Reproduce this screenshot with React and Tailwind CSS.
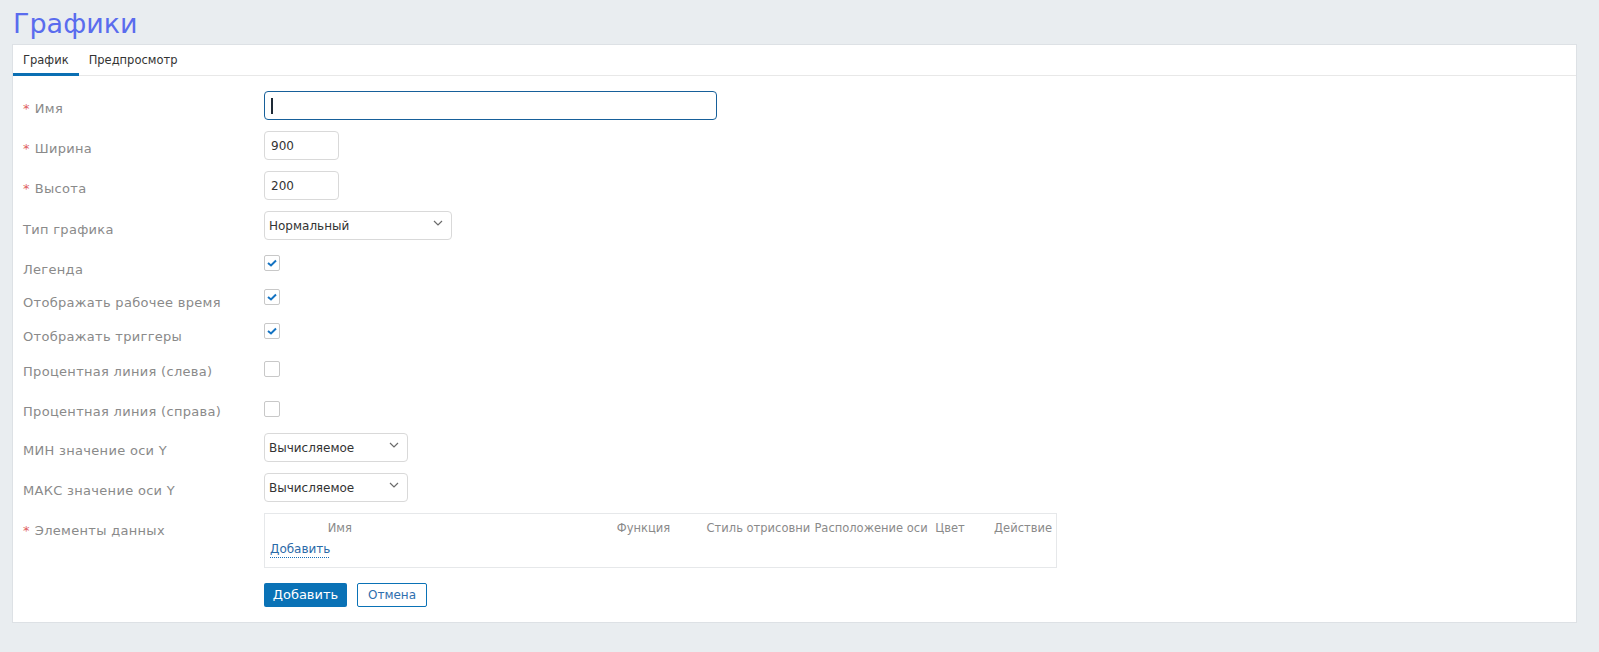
// App.jsx
import React from "react";

const FONT = { fontFamily: '"DejaVu Sans", "Noto Sans", sans-serif' };

// ---------- small form bits ----------
const Chevron = () => (
  <svg width="10" height="6" viewBox="0 0 10 6" className="mt-[8px]">
    <polyline points="1,1 5,5 9,1" fill="none" stroke="#6b6b6b" strokeWidth="1.2" />
  </svg>
);

const Select = ({ value, width }) => (
  <div
    className={`flex h-[29px] ${width} items-start justify-between rounded-[4px] border border-[#d9d9d9] bg-white pl-[4px] pr-[8px]`}
  >
    <span className="mt-[6px] text-[12px] leading-[16px] text-[#333]">{value}</span>
    <Chevron />
  </div>
);

const TextInput = ({ value }) => (
  <div className="flex h-[29px] w-[75px] items-center rounded-[4px] border border-[#d9d9d9] bg-white pl-[6px] text-[12px] text-[#333]">
    {value}
  </div>
);

const Checkbox = ({ checked }) => (
  <div className="flex h-[16px] w-[16px] items-center justify-center rounded-[2px] border border-[#c8c8c8] bg-white">
    {checked && (
      <svg width="10" height="8" viewBox="0 0 10 8">
        <polyline points="1,4 4,6.5 9,1.5" fill="none" stroke="#1473c2" strokeWidth="2" />
      </svg>
    )}
  </div>
);

const Label = ({ text, required, mt }) => (
  <div className={`w-[241px] shrink-0 text-[13px] leading-[20px] tracking-[0.3px] text-[#8a8a8a] ${mt}`}>
    {required && <span className="mr-[5px] text-[#e0615f]">*</span>}
    {text}
  </div>
);

const DataTable = () => (
  <div className="h-[55px] w-[793px] border border-[#e6e8ea] bg-white pt-[4px] text-[11.5px] leading-[20px] text-[#8a8a8a]">
    <div className="flex whitespace-nowrap">
      <span className="w-[150px] text-center">Имя</span>
      <span className="ml-[202px] w-[90px]">Функция</span>
      <span className="w-[108px]">Стиль отрисовни</span>
      <span className="w-[121px]">Расположение оси</span>
      <span className="w-[59px]">Цвет</span>
      <span className="flex-1 pr-[4px] text-right">Действие</span>
    </div>
    <div className="mt-[1px] pl-[5px]">
      <span className="text-[12px] text-[#2b6aa8] underline decoration-dotted decoration-[#1a6fb8] underline-offset-[4px]">
        Добавить
      </span>
    </div>
  </div>
);

const rows = [
  {
    label: "Имя", required: true, h: "h-[40px]", mt: "mt-[8px]",
    control: (
      <div className="flex h-[29px] w-[453px] items-center rounded-[4px] border border-[#17609a] bg-white pl-[6px]">
        <div className="h-[16px] w-[2px] bg-[#1e2a36]" />
      </div>
    ),
  },
  { label: "Ширина", required: true, h: "h-[40px]", mt: "mt-[8px]", control: <TextInput value="900" /> },
  { label: "Высота", required: true, h: "h-[40px]", mt: "mt-[8px]", control: <TextInput value="200" /> },
  { label: "Тип графика", h: "h-[44px]", mt: "mt-[9px]", control: <Select value="Нормальный" width="w-[188px]" /> },
  { label: "Легенда", h: "h-[34px]", mt: "mt-[5px]", control: <Checkbox checked /> },
  { label: "Отображать рабочее время", h: "h-[34px]", mt: "mt-[4px]", control: <Checkbox checked /> },
  { label: "Отображать триггеры", h: "h-[38px]", mt: "mt-[4px]", control: <Checkbox checked /> },
  { label: "Процентная линия (слева)", h: "h-[40px]", mt: "mt-[1px]", control: <Checkbox /> },
  { label: "Процентная линия (справа)", h: "h-[32px]", mt: "mt-[1px]", control: <Checkbox /> },
  { label: "МИН значение оси Y", h: "h-[40px]", mt: "mt-[8px]", control: <Select value="Вычисляемое" width="w-[144px]" /> },
  { label: "МАКС значение оси Y", h: "h-[40px]", mt: "mt-[8px]", control: <Select value="Вычисляемое" width="w-[144px]" /> },
  { label: "Элементы данных", required: true, h: "h-[70px]", mt: "mt-[8px]", control: <DataTable /> },
];

const App = () => {
  return (
    <div className="min-h-[652px] w-full bg-[#e9edf0] pl-[12px] pr-[22px]" style={FONT}>
      {/* page title */}
      <div className="h-[44px] pl-[1px] pt-[6px] text-[27px] font-normal leading-[36px] text-[#5a6cee]">
        Графики
      </div>

      {/* card */}
      <div className="border border-[#dde1e5] bg-white">
        <div className="flex h-[31px] border-b border-[#e8e8e8] text-[11.5px] text-[#333]">
          <div className="flex h-[31px] items-center border-b-[3px] border-[#0b6fb3] px-[10px] pt-[3px]">
            График
          </div>
          <div className="flex h-[31px] items-center px-[10px]">Предпросмотр</div>
        </div>

        <div className="pb-[15px] pl-[10px] pt-[15px]">
          {rows.map((r, i) => (
            <div key={i} className={`flex items-start ${r.h}`}>
              <Label text={r.label} required={r.required} mt={r.mt} />
              {r.control}
            </div>
          ))}

          <div className="flex gap-[10px] pl-[241px]">
            <button className="h-[24px] w-[83px] rounded-[2px] bg-[#0a72b6] text-[13px] text-white">
              Добавить
            </button>
            <button className="h-[24px] w-[70px] rounded-[2px] border border-[#0a72b6] bg-white text-[12px] text-[#2f6fae]">
              Отмена
            </button>
          </div>
        </div>
      </div>
    </div>
  );
};

export default App;
